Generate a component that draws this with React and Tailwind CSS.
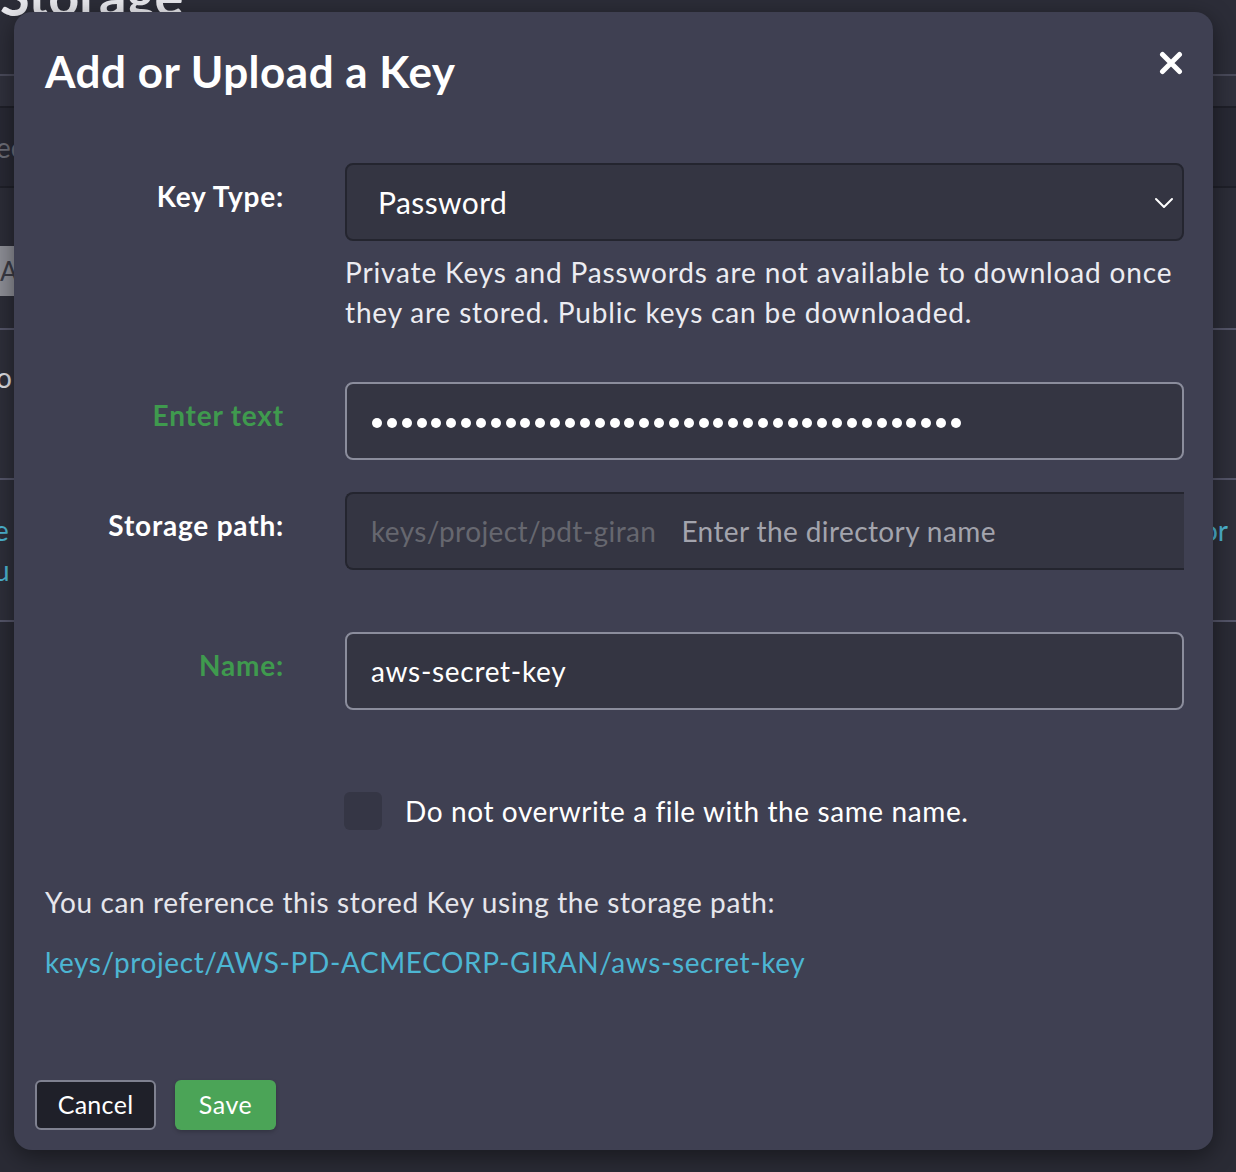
import React from "react";

const font = { fontFamily: "Lato, 'Noto Sans', sans-serif" };

function Dots() {
  const n = Array.from({ length: 40 });
  return (
    <div className="mt-[4px] flex items-center gap-[4.85px]">
      {n.map((_, i) => (
        <span key={i} className="block h-[10px] w-[10px] rounded-full bg-white" />
      ))}
    </div>
  );
}

function Label({ children, green }) {
  return (
    <div
      className={`pt-[15px] text-right text-[28px] font-bold leading-[36px] tracking-[0.8px] ${
        green ? "text-[#3f9a4e]" : "text-white"
      }`}
    >
      {children}
    </div>
  );
}

export default function App() {
  return (
    <div
      className="relative h-[1172px] w-[1236px] overflow-hidden bg-[#2b2c37]"
      style={font}
    >
      {/* Background page (dimmed) */}
      <div className="flex flex-col">
        <div className="h-[76px] border-b-2 border-[#4a4b5b] bg-[#2c2d38]">
          <div className="-mt-[34px] text-[54px] font-bold leading-[60px] text-[#e9e9ee]">
            Storage
          </div>
        </div>
        <div className="h-[32px] border-b-2 border-[#1f2029] bg-[#30313d]" />
        <div className="flex h-[80px] items-center border-b-2 border-[#1f2029] bg-[#282934] text-[28px] text-[#6d6e78]">
          <span className="-ml-[4px]">ec</span>
        </div>
        <div className="flex h-[142px] items-start border-b-2 border-[#55566a] bg-[#2c2d38] pt-[58px]">
          <div className="flex h-[50px] w-[60px] items-center bg-[#8e8f97] text-[26px] text-[#3a3b45]">
            Ac
          </div>
        </div>
        <div className="flex h-[150px] items-start border-b-2 border-[#55566a] bg-[#2e2f3a] pt-[26px] text-[28px] text-[#e0e0e6]">
          <span className="-ml-[4px]">o</span>
        </div>
        <div className="flex h-[142px] justify-between border-b-2 border-[#55566a] bg-[#2e2f3a] pt-[30px] text-[28px] leading-[40px] text-[#4db6d3]">
          <div className="-ml-[6px] flex flex-col">
            <span>e</span>
            <span>u</span>
          </div>
          <span className="pr-[8px]">or</span>
        </div>
        <div className="h-[550px] bg-[#2a2b35]" />
      </div>

      {/* Modal */}
      <div className="absolute left-[14px] top-[12px] flex h-[1138px] w-[1199px] flex-col rounded-[18px] bg-[#3f4052] pl-[31px] pr-[29px] shadow-[0_6px_24px_rgba(0,0,0,0.45)]">
        <div className="mt-[33px] flex items-start justify-between">
          <h1 className="text-[44px] font-bold leading-[52px] tracking-[0.5px] text-white">
            Add or Upload a Key
          </h1>
          <svg
            className="mr-[1px] mt-[6px]"
            width="24"
            height="24"
            viewBox="0 0 24 24"
          >
            <path
              d="M3.5 3.5 L20.5 20.5 M20.5 3.5 L3.5 20.5"
              stroke="white"
              strokeWidth="5"
              strokeLinecap="round"
            />
          </svg>
        </div>

        <div className="mt-[66px] grid grid-cols-[239px_839px] gap-x-[61px] text-[28px] tracking-[0.6px]">
          {/* Key type */}
          <Label>Key Type:</Label>
          <div className="flex flex-col">
            <div className="flex h-[78px] items-center justify-between rounded-[8px] border-2 border-[#24252f] bg-[#343542] pl-[31px] pr-[8px]">
              <span className="text-[30px] tracking-[0.4px] text-white">Password</span>
              <svg width="20" height="12" viewBox="0 0 20 12" className="mt-[2px]">
                <path
                  d="M2 2 L10 10 L18 2"
                  fill="none"
                  stroke="white"
                  strokeWidth="2"
                  strokeLinecap="round"
                  strokeLinejoin="round"
                />
              </svg>
            </div>
            <p className="mt-[11px] leading-[40px] tracking-[0.85px] text-[#ececf1]">
              Private Keys and Passwords are not available to download once
              they are stored. Public keys can be downloaded.
            </p>
          </div>

          {/* Enter text */}
          <div className="mt-[50px]">
            <Label green>Enter text</Label>
          </div>
          <div className="mt-[50px] flex h-[78px] items-center rounded-[8px] border-2 border-[#8b8d9c] bg-[#343542] pl-[25px]">
            <Dots />
          </div>

          {/* Storage path */}
          <div className="mt-[32px]">
            <Label>Storage path:</Label>
          </div>
          <div className="mt-[32px] flex h-[78px] items-center rounded-l-[8px] border-y-2 border-l-2 border-[#24252f] bg-[#343542] pl-[24px] tracking-[0.4px]">
            <span className="text-[#66676f]">keys/project/pdt-giran</span>
            <span className="ml-[25px] text-[#a3a4ad]">Enter the directory name</span>
          </div>

          {/* Name */}
          <div className="mt-[62px]">
            <Label green>Name:</Label>
          </div>
          <div className="mt-[62px] flex h-[78px] items-center rounded-[8px] border-2 border-[#8b8d9c] bg-[#343542] pl-[24px] tracking-[0.7px] text-white">
            aws-secret-key
          </div>

          {/* Checkbox */}
          <div />
          <div className="mt-[80px] flex items-center">
            <div className="-ml-[1px] h-[38px] w-[38px] rounded-[6px] bg-[#353645]" />
            <span className="ml-[23px] text-white">
              Do not overwrite a file with the same name.
            </span>
          </div>
        </div>

        <p className="mt-[50px] text-[28px] leading-[40px] tracking-[0.6px] text-[#e6e6ec]">
          You can reference this stored Key using the storage path:
        </p>
        <p className="mt-[20px] text-[28px] leading-[40px] tracking-[0.6px] text-[#4db6d3]">
          keys/project/AWS-PD-ACMECORP-GIRAN/aws-secret-key
        </p>

        <div className="mt-auto mb-[20px] -ml-[10px] flex gap-[19px]">
          <button className="flex h-[50px] w-[121px] items-center justify-center rounded-[6px] border-2 border-[#7f8190] bg-[#1f2029] text-[25px] tracking-[0.3px] text-white">
            Cancel
          </button>
          <button className="flex h-[50px] w-[101px] items-center justify-center rounded-[6px] bg-[#4ba457] text-[25px] tracking-[0.5px] text-white shadow-[0_2px_4px_rgba(0,0,0,0.2)]">
            Save
          </button>
        </div>
      </div>
    </div>
  );
}
